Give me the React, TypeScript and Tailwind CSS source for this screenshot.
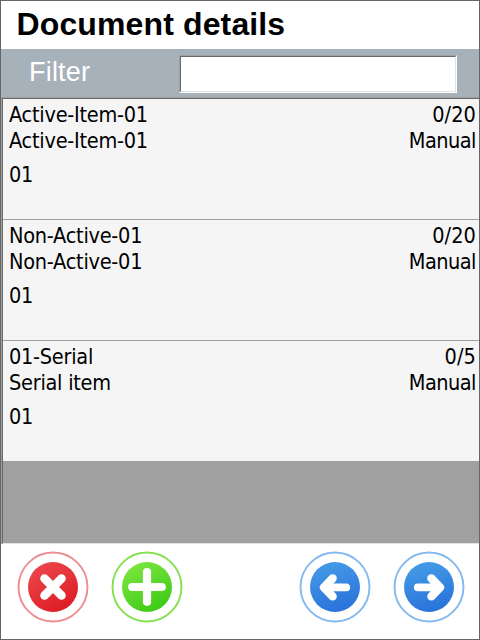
import React from "react";

const items = [
  { code: "Active-Item-01", name: "Active-Item-01", loc: "01", qty: "0/20", mode: "Manual" },
  { code: "Non-Active-01", name: "Non-Active-01", loc: "01", qty: "0/20", mode: "Manual" },
  { code: "01-Serial", name: "Serial item", loc: "01", qty: "0/5", mode: "Manual" },
];

type Tone = { id: string; ring: string; from: string; to: string; angle: number };

const tones: Record<string, Tone> = {
  red: { id: "red", ring: "#ee8c90", from: "#eb444a", to: "#de1d25", angle: 60 },
  green: { id: "green", ring: "#83e04e", from: "#78e53d", to: "#3fcb16", angle: 60 },
  blue: { id: "blue", ring: "#82b9ef", from: "#449ae6", to: "#2972da", angle: 75 },
};

function RoundButton({ tone, label, children }: { tone: Tone; label: string; children: React.ReactNode }) {
  return (
    <button aria-label={label} className="size-[72px]">
      <svg viewBox="-36 -36 72 72" className="block size-full">
        <defs>
          <linearGradient id={tone.id} gradientTransform={`rotate(${tone.angle} .5 .5)`}>
            <stop offset="0" stopColor={tone.from} />
            <stop offset="1" stopColor={tone.to} />
          </linearGradient>
        </defs>
        <circle r="34.5" fill="white" stroke={tone.ring} strokeWidth="1.9" />
        <circle r="25" fill={`url(#${tone.id})`} />
        <g fill="none" stroke="white" strokeLinecap="round" strokeLinejoin="round">
          {children}
        </g>
      </svg>
    </button>
  );
}

export default function App() {
  return (
    <div className="flex h-[640px] w-[480px] flex-col border border-[#666] bg-white font-['Liberation_Sans',Arial,sans-serif]">
      <h1 className="h-12 pl-[15.5px] text-[32px] leading-[46px] font-bold tracking-[0.13px] whitespace-nowrap text-black">
        Document details
      </h1>
      <div className="flex h-12 items-start justify-between bg-[#a7b1b9] pr-[22px] pl-7">
        <label className="text-[27px] leading-[47px] tracking-[0.2px] text-white">Filter</label>
        <div className="mt-1.5 h-[38px] w-[278px] border border-t-[#a0a0a0] border-r-white border-b-white border-l-[#a0a0a0]">
          <input className="block size-full border border-t-[#696969] border-r-[#e3e3e3] border-b-[#e3e3e3] border-l-[#696969] bg-white outline-none" />
        </div>
      </div>
      <div className="h-[447px] border-t border-l border-[#a0a0a0]">
        <div className="h-full border-t border-b border-l border-t-[#696969] border-b-[#e3e3e3] border-l-[#696969] bg-[#a0a0a0]">
          {items.map((it) => (
            <div
              key={it.code}
              className="flex h-[121px] justify-between border-b border-[#a0a0a0] bg-[#f5f5f5] pt-[3px] pr-[3px] pl-1.5 font-['DejaVu_Sans_Condensed','DejaVu_Sans',sans-serif] text-[21.5px] leading-[26px] tracking-[-0.25px] text-black [font-stretch:condensed]"
            >
              <div>
                <div>{it.code}</div>
                <div>{it.name}</div>
                <div className="mt-2">{it.loc}</div>
              </div>
              <div className="text-right">
                <div className="tracking-[0.1px]">{it.qty}</div>
                <div className="tracking-[-0.5px]">{it.mode}</div>
              </div>
            </div>
          ))}
        </div>
      </div>
      <div className="flex justify-between pt-[7px] pr-3.5 pl-4">
        <div className="flex gap-[22px]">
          <RoundButton tone={tones.red} label="Cancel">
            <path d="M-8.5-8.5 8.5 8.5M8.5-8.5-8.5 8.5" strokeWidth="8.6" />
          </RoundButton>
          <RoundButton tone={tones.green} label="Add">
            <path d="M-14.8 0H14.8M0-14.8V14.8" strokeWidth="8.2" />
          </RoundButton>
        </div>
        <div className="flex gap-[22px]">
          <RoundButton tone={tones.blue} label="Previous">
            <path d="M11.3.4H-9" strokeWidth="7.6" />
            <path d="M-2.4-8.6-11 .4-2.4 9.4" strokeWidth="8.4" />
          </RoundButton>
          <RoundButton tone={tones.blue} label="Next">
            <path d="M-11.3.4H9" strokeWidth="7.6" />
            <path d="M2.4-8.6 11 .4 2.4 9.4" strokeWidth="8.4" />
          </RoundButton>
        </div>
      </div>
    </div>
  );
}
